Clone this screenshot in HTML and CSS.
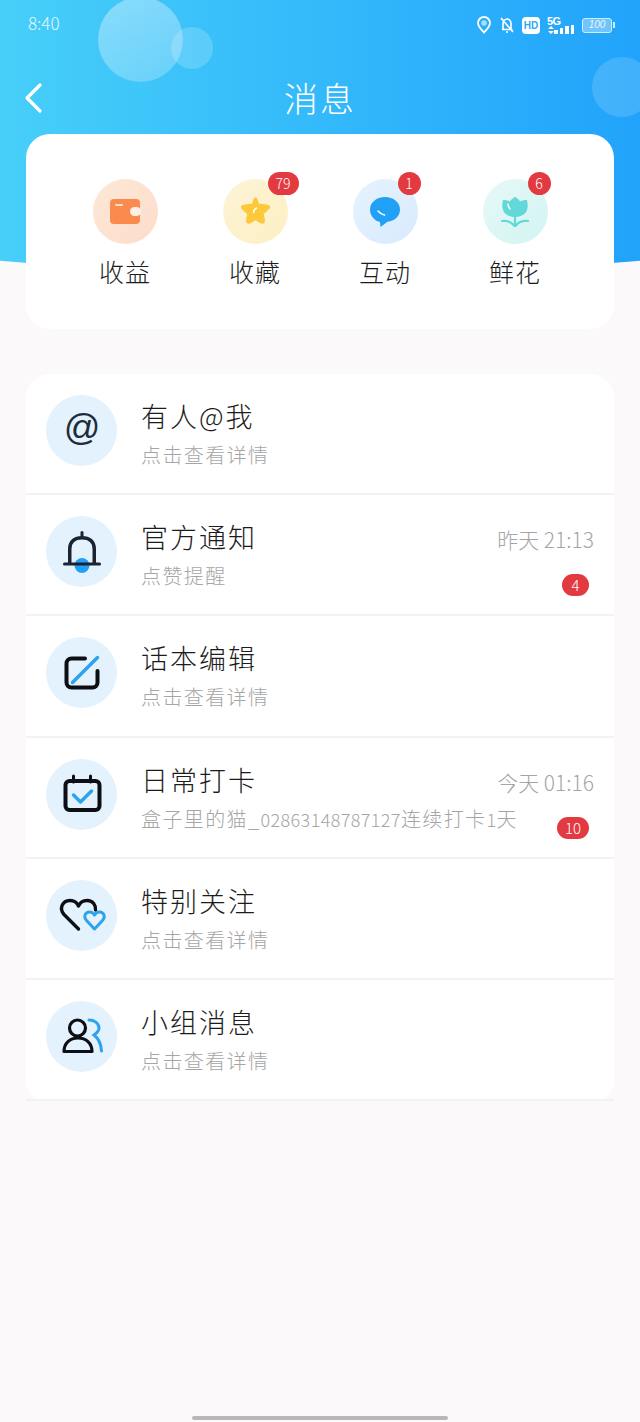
FILE: index.html
```html
<!DOCTYPE html>
<html lang="zh-CN">
  <head>
    <meta charset="UTF-8" />
    <meta name="viewport" content="width=device-width, initial-scale=1.0" />
    <title>消息</title>
    <link rel="stylesheet" href="styles.css">
  </head>
  <body>
    <div class="page">
      <div class="banner">
        <span class="bubble bubble-big"></span>
        <span class="bubble bubble-small"></span>
        <span class="bubble bubble-right"></span>
      </div>

      <div class="status">
        <span class="clock">8:40</span>
        <div class="status-icons">
          <svg width="16" height="18" viewBox="0 0 16 18" fill="none">
            <path d="M8 16.500C5 13 2 10.500 2 7a6 6 0 0 1 12 0c0 3.500-3 6-6 9.500z" stroke="#fff" stroke-width="1.800"/>
            <circle cx="8" cy="7" r="2.800" fill="#a8e0fb"/>
          </svg>
          <svg width="16" height="18" viewBox="0 0 16 18" fill="none">
            <path d="M3 13.500h10.500M4 13V7.500C4 5 6 3 8 3s4 2 4 4.500V13M7 16h2M2 2l12 14" stroke="#fff" stroke-width="1.600"/>
          </svg>
          <span class="hd">HD</span>
          <span class="signal">
            <span class="signal-text">5G</span>
            <svg class="signal-arrows" width="6" height="8" viewBox="0 0 6 8">
              <path d="M3 0 6 3H0zM0 5h6L3 8z" fill="#fff"/>
            </svg>
            <i class="bar bar-1"></i><i class="bar bar-2"></i><i class="bar bar-3"></i><i class="bar bar-4"></i>
          </span>
          <span class="battery">100</span>
        </div>
      </div>

      <div class="topbar">
        <svg class="back" width="20" height="32" viewBox="0 0 20 32" fill="none">
          <path d="M17 3 4 16l13 13" stroke="#fff" stroke-width="3.200" stroke-linecap="round" stroke-linejoin="round"/>
        </svg>
        <h1 class="title">消息</h1>
      </div>

      <div class="card shortcuts">
        <div class="shortcut">
          <div class="shortcut-icon tone-orange">
            <svg width="32" height="26" viewBox="0 0 32 26">
              <rect x="1" y="0" width="30" height="25" rx="4" fill="#fb8a4e"/>
              <rect x="21" y="8" width="11" height="9" rx="4.500" fill="#fdf0e6"/>
              <rect x="6" y="5" width="8" height="2" rx="1" fill="#fde0cc"/>
            </svg>
          </div>
          <span class="shortcut-name">收益</span>
        </div>
        <div class="shortcut">
          <div class="shortcut-icon tone-yellow">
            <svg width="31" height="31" viewBox="0 0 32 32">
              <path d="M16 1.500c1.500 0 2.200 1.500 3.500 6.500 5.500.3 11 .8 11.500 3 .4 1.800-3.500 5-6.500 7.500 1 4 2.200 9-.2 10-2 .8-5-1.500-8.300-3.500-3.300 2-6.300 4.300-8.300 3.500-2.400-1-1.200-6-.2-10C4.500 16 .6 12.800 1 11c.5-2.200 6-2.700 11.500-3C13.800 3 14.500 1.500 16 1.500z" fill="#fbc93a"/>
              <path d="M14 17c0-2 1-3.500 3-4.500" stroke="#fff" stroke-width="1.500" fill="none" stroke-linecap="round"/>
            </svg>
            <span class="badge badge-wide">79</span>
          </div>
          <span class="shortcut-name">收藏</span>
        </div>
        <div class="shortcut">
          <div class="shortcut-icon tone-blue">
            <svg width="32" height="32" viewBox="0 0 32 32">
              <path d="M16 1C7.500 1 1 6.500 1 13.500c0 6.500 5.500 12 10 12.500l.5 5 7-5.300C26 25 31 20 31 13.500 31 6.500 24.500 1 16 1z" fill="#22a0f6"/>
              <path d="M9 15c2 2.500 4 3.500 6.500 4" stroke="#fff" stroke-width="1.500" fill="none" stroke-linecap="round"/>
            </svg>
            <span class="badge">1</span>
          </div>
          <span class="shortcut-name">互动</span>
        </div>
        <div class="shortcut">
          <div class="shortcut-icon tone-green">
            <svg width="28" height="30" viewBox="0 0 28 30">
              <path d="M14 0c2 1 4 2.500 5 4.500 2-1 4-1.500 7-1.500 .8 3 1 7 0 10-1.300 4-5.500 7-12 7S3.300 17 2 13C1 10 1.200 6 2 3c3 0 5 .5 7 1.500C10 2.500 12 1 14 0z" fill="#62d8d8"/>
              <path d="M1 24c5-.5 9 .5 12 4.500M27 24c-5-.5-9 .5-12 4.500M14 20v9" stroke="#62d8d8" stroke-width="2.200" fill="none" stroke-linecap="round"/>
              <path d="M7 7c0 2 .6 3.500 2 5" stroke="#fff" stroke-width="1.400" fill="none" stroke-linecap="round"/>
            </svg>
            <span class="badge">6</span>
          </div>
          <span class="shortcut-name">鲜花</span>
        </div>
      </div>

      <div class="card messages">
        <div class="row">
          <div class="row-icon">
            <span class="at-sign">@</span>
          </div>
          <div class="row-body">
            <div class="row-title">有人@我</div>
            <div class="row-sub">点击查看详情</div>
          </div>
        </div>
        <div class="row">
          <div class="row-icon">
            <svg width="38" height="42" viewBox="0 0 38 42" fill="none">
              <circle cx="19" cy="34.500" r="7.500" fill="#22a0f6"/>
              <path d="M6.750 33V18C6.750 10 12 6.750 19 6.750S31.250 10 31.250 18V33" stroke="#1c2233" stroke-width="3.500"/>
              <path d="M19 1.500V6" stroke="#1c2233" stroke-width="3" stroke-linecap="round"/>
              <path d="M1.500 33h35" stroke="#1c2233" stroke-width="3" stroke-linecap="round"/>
            </svg>
          </div>
          <div class="row-body">
            <div class="row-title">官方通知</div>
            <div class="row-sub">点赞提醒</div>
          </div>
          <div class="row-side">
            <span class="row-time">昨天 21:13</span>
            <span class="count count-round">4</span>
          </div>
        </div>
        <div class="row">
          <div class="row-icon">
            <svg width="38" height="38" viewBox="0 0 38 38" fill="none">
              <path d="M22 4.500H8.500a5 5 0 0 0-5 5v19a5 5 0 0 0 5 5h21a5 5 0 0 0 5-5V17" stroke="#0d0f14" stroke-width="4" stroke-linecap="round"/>
              <path d="M9.500 28.500 34.500 3.500" stroke="#2da3ee" stroke-width="3.500" stroke-linecap="round"/>
            </svg>
          </div>
          <div class="row-body">
            <div class="row-title">话本编辑</div>
            <div class="row-sub">点击查看详情</div>
          </div>
        </div>
        <div class="row">
          <div class="row-icon">
            <svg width="40" height="40" viewBox="0 0 40 40" fill="none">
              <rect x="3.500" y="7" width="34" height="29" rx="4" stroke="#0d0f14" stroke-width="4"/>
              <path d="M11.500 2V8M28.500 2V8" stroke="#0d0f14" stroke-width="3" stroke-linecap="round"/>
              <path d="m11.500 21 7 7 11-11" stroke="#2da3ee" stroke-width="3.500" stroke-linecap="round" stroke-linejoin="round"/>
            </svg>
          </div>
          <div class="row-body">
            <div class="row-title">日常打卡</div>
            <div class="row-sub">盒子里的猫_<span class="sub-num">02863148787127</span>连续打卡<span class="sub-num">1</span>天</div>
          </div>
          <div class="row-side">
            <span class="row-time">今天 01:16</span>
            <span class="count">10</span>
          </div>
        </div>
        <div class="row">
          <div class="row-icon">
            <svg width="48" height="36" viewBox="0 0 48 36" fill="none">
              <path d="M20.500 32 6 17.500C1 12 4 3.500 12 3.500c4 0 7 2 8.500 5.500C22 5.500 25 3.500 29 3.500c6 0 9 5 8.500 9.500" stroke="#0d0f14" stroke-width="3.400" stroke-linecap="round" stroke-linejoin="round"/>
              <path d="M36.500 32 28.500 23.500C25 19.500 27.500 15 31.500 15c2.200 0 4 1 5 3 1-2 2.800-3 5-3 4 0 6.500 4.500 3 8.500z" fill="#e3f2fd" stroke="#2da3ee" stroke-width="3" stroke-linejoin="round"/>
            </svg>
          </div>
          <div class="row-body">
            <div class="row-title">特别关注</div>
            <div class="row-sub">点击查看详情</div>
          </div>
        </div>
        <div class="row">
          <div class="row-icon">
            <svg width="42" height="36" viewBox="0 0 42 36" fill="none">
              <circle cx="16.500" cy="10" r="8" stroke="#0d0f14" stroke-width="3.200"/>
              <path d="M3 33.500C3 25 9 20 17 20s14 5 14 13.500z" stroke="#0d0f14" stroke-width="3.200" stroke-linejoin="round"/>
              <path d="M28 2c5 0 10 3 10 8 0 3-2 5-5 7 4 3 7 8 7.500 16" stroke="#2da3ee" stroke-width="3" stroke-linecap="round"/>
            </svg>
          </div>
          <div class="row-body">
            <div class="row-title">小组消息</div>
            <div class="row-sub">点击查看详情</div>
          </div>
        </div>
      </div>

      <div class="home-bar"></div>
    </div>
  </body>
</html>
```

FILE: styles.css
```css
* {
  box-sizing: border-box;
}
body {
  margin: 0;
  background-color: #fbf9fa;
  font-family: "Noto Sans CJK SC", "Noto Sans", sans-serif;
  font-weight: 300;
}
.page {
  position: relative;
  height: 1422px;
  overflow: hidden;
  padding: 0 26px;
}

/* blue top area, sits behind everything */
.banner {
  position: absolute;
  top: 0;
  left: -70px;
  width: 780px;
  height: 271px;
  border-radius: 0 0 50% 50% / 0 0 24px 24px;
  overflow: hidden;
  background: linear-gradient(90deg, #47cff9 9%, #21a3fb 91%);
}
.bubble {
  position: absolute;
  border-radius: 50%;
}
.bubble-big {
  left: 168px;
  top: -3px;
  width: 85px;
  height: 85px;
  background: linear-gradient(160deg, rgba(255, 255, 255, 0.38), rgba(255, 255, 255, 0.22));
}
.bubble-small {
  left: 241px;
  top: 27px;
  width: 42px;
  height: 42px;
  background: rgba(255, 255, 255, 0.18);
}
.bubble-right {
  left: 662px;
  top: 57px;
  width: 60px;
  height: 60px;
  background: rgba(255, 255, 255, 0.15);
}

.status {
  position: relative;
  display: flex;
  justify-content: space-between;
  align-items: center;
  height: 46px;
  margin: 0 -26px;
  padding: 0 28px;
  color: #fff;
}
.clock {
  font-size: 17px;
  opacity: 0.85;
  margin-top: -1px;
}
.status-icons {
  display: flex;
  align-items: center;
  gap: 7px;
  margin-top: 4px;
}
.hd {
  width: 18px;
  height: 17px;
  border-radius: 4px;
  background-color: #fff;
  color: #2aa9f8;
  font-family: "Liberation Sans", sans-serif;
  font-size: 10px;
  font-weight: 700;
  line-height: 17px;
  text-align: center;
}
.signal {
  position: relative;
  display: flex;
  align-items: flex-end;
  gap: 2px;
  width: 28px;
  height: 17px;
  padding-left: 7px;
}
.signal-text {
  position: absolute;
  left: 0;
  top: 0;
  font-family: "Liberation Sans", sans-serif;
  font-size: 11px;
  font-weight: 700;
  letter-spacing: -0.5px;
  line-height: 9px;
}
.signal-arrows {
  position: absolute;
  left: 1px;
  bottom: 0;
}
.bar {
  width: 3.500px;
  background-color: #fff;
}
.bar-1 {
  height: 4px;
}
.bar-2 {
  height: 6px;
}
.bar-3 {
  height: 8px;
}
.bar-4 {
  height: 9px;
}
.battery {
  position: relative;
  width: 30px;
  height: 15px;
  border: 1.500px solid #cdeefd;
  border-radius: 3px;
  background-color: rgba(255, 255, 255, 0.35);
  color: #e8f7ff;
  font-family: "Liberation Sans", sans-serif;
  font-size: 10px;
  font-style: italic;
  line-height: 12px;
  text-align: center;
}
.battery::after {
  content: "";
  position: absolute;
  top: 3px;
  right: -4px;
  width: 2px;
  height: 6px;
  background-color: #cdeefd;
}

.topbar {
  position: relative;
  display: flex;
  justify-content: center;
  align-items: center;
  height: 60px;
  margin-top: 22px;
}
.back {
  position: absolute;
  left: -3px;
  top: 14px;
}
.title {
  margin: 0;
  color: #fff;
  font-size: 34px;
  font-weight: 300;
  letter-spacing: 2px;
  line-height: 60px;
}

.card {
  position: relative;
  background-color: #fff;
  border-radius: 24px;
}
.shortcuts {
  display: grid;
  grid-template-columns: repeat(4, 130px);
  justify-content: center;
  height: 195px;
  margin-top: 6px;
  padding-top: 45px;
}
.shortcut {
  display: flex;
  flex-direction: column;
  align-items: center;
  gap: 9px;
}
.shortcut-icon {
  position: relative;
  display: flex;
  justify-content: center;
  align-items: center;
  width: 65px;
  height: 65px;
  border-radius: 50%;
}
.tone-orange {
  background: linear-gradient(135deg, #fde8d6, #fddccb);
}
.tone-yellow {
  background: linear-gradient(135deg, #fdf3d6, #fdf0c4);
}
.tone-blue {
  background: linear-gradient(135deg, #e5f3fd, #d8eafe);
}
.tone-green {
  background: linear-gradient(135deg, #e6f9f8, #d3f4f1);
}
.shortcut-name {
  color: #1c1c1c;
  font-size: 25px;
  letter-spacing: 1px;
  line-height: 36px;
}
.badge {
  position: absolute;
  top: -7px;
  left: 45px;
  width: 23px;
  height: 23px;
  border-radius: 12px;
  background-color: #e23a40;
  color: #fff;
  font-size: 14px;
  line-height: 23px;
  text-align: center;
}
.badge-wide {
  width: 31px;
}

.messages {
  margin-top: 45px;
  border-radius: 24px 24px 20px 20px;
}
.row {
  position: relative;
  display: flex;
  height: 121.200px;
  padding: 21px 20px 0;
  border-bottom: 2px solid #f3f2f3;
}
.row-icon {
  display: flex;
  flex: none;
  justify-content: center;
  align-items: center;
  width: 71px;
  height: 71px;
  border-radius: 50%;
  background-color: #e3f2fd;
}
.at-sign {
  margin-top: -5px;
  color: #1f2c3a;
  font-family: "Liberation Sans", sans-serif;
  font-size: 36px;
  font-style: italic;
  font-weight: 400;
  line-height: 1;
}
.row-body {
  margin-left: 24px;
}
.row-title {
  color: #1c1c1c;
  font-size: 27px;
  letter-spacing: 2px;
  line-height: 40px;
  margin-top: 1px;
}
.row-sub {
  color: #a5a5a5;
  font-size: 20px;
  letter-spacing: 1.400px;
  line-height: 30px;
  margin-top: 4px;
  white-space: nowrap;
}
.sub-num {
  font-size: 18px;
  letter-spacing: 0.400px;
}
.row-side {
  position: absolute;
  top: 26px;
  right: 20px;
  display: flex;
  flex-direction: column;
  align-items: flex-end;
}
.row-time {
  color: #a5a5a5;
  font-size: 21px;
  line-height: 36px;
  white-space: nowrap;
}
.count {
  min-width: 32px;
  height: 22px;
  margin-top: 17px;
  margin-right: 5px;
  border-radius: 11px;
  background-color: #e23a40;
  color: #fff;
  font-size: 15px;
  line-height: 22px;
  text-align: center;
}
.count-round {
  min-width: 27px;
}

.home-bar {
  position: absolute;
  left: 192px;
  bottom: 2px;
  width: 256px;
  height: 4px;
  border-radius: 2px;
  background-color: #b9b7b8;
}
```
